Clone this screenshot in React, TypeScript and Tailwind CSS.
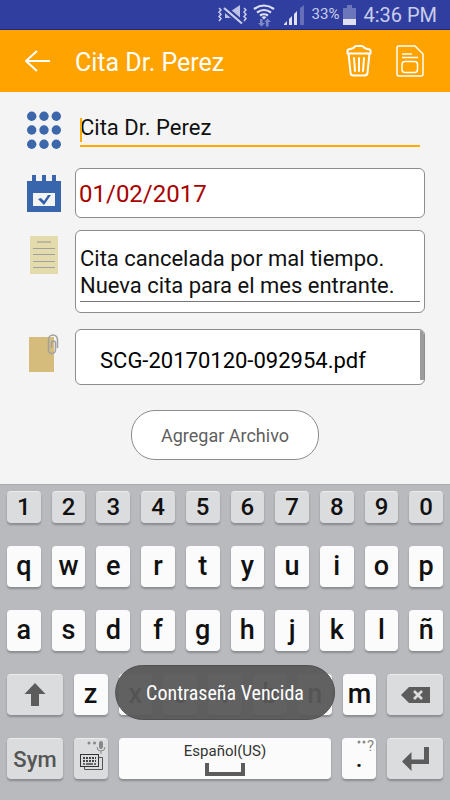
import type { ReactNode } from "react"

const numbers = ["1", "2", "3", "4", "5", "6", "7", "8", "9", "0"]
const firstRow = ["q", "w", "e", "r", "t", "y", "u", "i", "o", "p"]
const secondRow = ["a", "s", "d", "f", "g", "h", "j", "k", "l", "ñ"]
const thirdRow = ["z", "x", "c", "v", "b", "n", "m"]

const light = "bg-[#fbfbfb] text-[#111111]"
const dark = "bg-[#dbdcde] text-[#555555] border-t border-[#ececec]"

function Key({ className, label, children }: { className: string; label?: string; children: ReactNode }) {
  return (
    <button
      type="button"
      aria-label={label}
      className={`flex min-w-0 items-center justify-center rounded-[4px] shadow-[0_2px_2px_rgba(0,0,0,0.25)] ${className}`}
    >
      {children}
    </button>
  )
}

function StatusBar() {
  return (
    <div className="flex h-[30px] items-center justify-end border-b border-[#1c2a80] bg-[#303f9f] pr-[13px] text-[#c9cdea]">
      <svg width="30" height="22" viewBox="0 0 30 22" fill="none" className="mr-[6px]">
        <path d="M2 4l2 2-2 2 2 2.500-2 2 2 2-2 2.500M27 4l2 2-2 2 2 2.500-2 2 2 2-2 2.500" stroke="#c9cdea" strokeWidth="1.500" />
        <path d="M8 7h6l9-6v19l-9-6H8z" fill="#bcc2e4" />
        <path d="M7 6.500l18 15.500" stroke="#303f9f" strokeWidth="2.500" />
        <path d="M7 1.500l18 15.500" stroke="#303f9f" strokeWidth="2.500" />
        <path d="M7 4l18 15.500" stroke="#c9cdea" strokeWidth="2.200" />
      </svg>
      <svg width="22" height="24" viewBox="0 0 22 24" fill="none" className="mr-[9px]">
        <path d="M1 6Q11-1 21 6M4 9.500Q11 4.500 18 9.500M7 12.500Q11 10 15 12.500" stroke="#dfe1f2" strokeWidth="2.200" />
        <path d="M8.500 14q2.500-1.500 5 0L11 16.500z" fill="#dfe1f2" />
        <path d="M7 16h2.500v4H12l-3.500 3.500L5 20h2zM13 23.500h2.500V19H18l-3.500-3.500L11.500 19H13z" fill="#7f89c6" />
      </svg>
      <svg width="20" height="20" viewBox="0 0 20 20" className="mr-[8px]">
        <path d="M0 20v-1l3-3v4zM5 20v-6l3-3v9zM10 20V9l3-3v14z" fill="#dfe1f2" />
        <path d="M16 20V3l4-3v20z" fill="#6570b8" />
      </svg>
      <span className="mr-[4px] text-[15px]">33%</span>
      <svg width="13" height="20" viewBox="0 0 13 20" className="mr-[7px]">
        <path d="M4 0h5v3h4v17H0V3h4z" fill="#6c76bb" />
        <path d="M0 14h13v6H0z" fill="#dfe1f2" />
      </svg>
      <span className="text-[20px]">4:36 PM</span>
    </div>
  )
}

function Header() {
  return (
    <header className="flex h-[62px] items-center bg-[#ffa300] pr-[26px] pl-[25px] text-white">
      <button type="button" aria-label="Volver">
        <svg width="25" height="22" viewBox="0 0 25 22" fill="none" stroke="currentColor" strokeWidth="2">
          <path d="M25 11H1M12 1L1 11l11 10" />
        </svg>
      </button>
      <h1 className="ml-[25px] flex-1 pt-[3px] text-[25px]">Cita Dr. Perez</h1>
      <button type="button" aria-label="Eliminar" className="mr-[24px]">
        <svg width="26" height="32" viewBox="0 0 26 32" fill="none" stroke="currentColor" strokeWidth="2" strokeLinecap="round" strokeLinejoin="round">
          <path d="M2.500 8.500H1.500V6Q1.500 4 4.500 4L7.500 3Q8.500 1 10.500 1h5q2 0 3 2l3 1q3 0 3 2v2.500H2.500l2 19q0 3 3 3h11q3 0 3-3l2-19" />
          <path d="M8 13l1 13M13 13v13M18 13l-1 13" />
        </svg>
      </button>
      <button type="button" aria-label="Guardar">
        <svg width="28" height="32" viewBox="0 0 28 32" fill="none" stroke="currentColor" strokeWidth="1.500" strokeLinejoin="round">
          <path d="M3 1h16l8 8v20q0 2-2 2H3q-2 0-2-2V3q0-2 2-2z" />
          <rect x="6" y="16.500" width="15.500" height="11" rx="3" />
          <path d="M6 9h10M6 12.500h16" />
        </svg>
      </button>
    </header>
  )
}

function GridIcon() {
  return (
    <svg width="34" height="38" viewBox="0 0 34 38" fill="#3c68ab">
      {[5.2, 19, 33.2].map((cy) => [4.7, 17, 29.3].map((cx) => <circle key={`${cx}-${cy}`} cx={cx} cy={cy} r="4.700" />))}
    </svg>
  )
}

function CalendarIcon() {
  return (
    <svg width="34" height="37" viewBox="0 0 34 37">
      <path d="M0 6h5V0h4v6h6V0h4v6h6V0h4v6h5v31H0z" fill="#3865ab" />
      <path d="M6 18h22v13H6z" fill="#f4f4f4" />
      <path d="M11 24l3-1 3 3 4-6h3l-7 10z" fill="#2f5fa8" />
    </svg>
  )
}

function NoteIcon() {
  return (
    <svg width="28" height="38" viewBox="0 0 28 38">
      <path d="M0 0h28v38H0z" fill="#e3dbab" />
      <path d="M7 6h14" stroke="#bcb8a0" strokeWidth="2" />
      <path d="M3 12.500h22M3 18.500h22M3 25.500h22M3 31.500h22" stroke="#9f9fa5" />
    </svg>
  )
}

function AttachmentIcon() {
  return (
    <svg width="30" height="38" viewBox="0 0 30 38" fill="none">
      <path d="M0 3h25v35H0z" fill="#d5bc7c" />
      <path d="M28.500 14V5.500a4.500 4.500 0 0 0-9 0V16a3.500 3.500 0 0 0 7 0V9a2 2 0 0 0-4 0v5" stroke="#a0a0a0" strokeWidth="1.500" />
    </svg>
  )
}

function AppointmentForm() {
  return (
    <form className="flex flex-1 flex-col bg-[#f4f4f4] px-[25px] pt-[19px] pb-6">
      <div className="flex items-center gap-3">
        <label htmlFor="nombre" aria-label="Nombre" className="flex w-[38px] justify-center">
          <GridIcon />
        </label>
        <div className="relative mx-[5px] flex-1">
          <input
            id="nombre"
            type="text"
            defaultValue="Cita Dr. Perez"
            className="block h-[34px] w-full border-b-2 border-[#ffab00] bg-transparent pb-[3px] text-[22px] text-[#111111] outline-none"
          />
          <span className="absolute top-[5px] left-0 h-6 w-[2px] bg-[#ffab00]" />
        </div>
      </div>

      <div className="mt-[19px] flex items-center gap-3">
        <label htmlFor="fecha" aria-label="Fecha" className="flex w-[38px] justify-center">
          <CalendarIcon />
        </label>
        <input
          id="fecha"
          type="text"
          defaultValue="01/02/2017"
          className="h-[50px] min-w-0 flex-1 rounded-[6px] border border-[#8c8c8c] bg-white px-[3px] pt-[2px] text-[24px] text-[#a90000] outline-none"
        />
      </div>

      <div className="mt-[12px] flex items-start gap-3">
        <label htmlFor="nota" aria-label="Nota" className="mt-[6px] flex w-[38px] justify-center">
          <NoteIcon />
        </label>
        <div className="flex-1 rounded-[6px] border border-[#8c8c8c] bg-white px-1 pt-[14px] pb-[10px]">
          <textarea
            id="nota"
            rows={2}
            defaultValue={"Cita cancelada por mal tiempo.\nNueva cita para el mes entrante."}
            className="block w-full resize-none overflow-hidden border-b border-[#777777] pb-[2px] text-[22px] leading-[27px] text-[#111111] outline-none"
          />
        </div>
      </div>

      <div className="mt-[16px] flex items-start gap-3">
        <span className="mt-[5px] flex w-[38px] justify-center">
          <AttachmentIcon />
        </span>
        <div className="flex h-[56px] flex-1 items-start justify-between overflow-hidden rounded-[6px] border border-[#8c8c8c] bg-white pl-6">
          <a href="#archivo" className="mt-[15px] text-[22px] leading-[32px] text-black">
            SCG-20170120-092954.pdf
          </a>
          <span className="h-[50px] w-1 bg-[#9c9c9c]" />
        </div>
      </div>

      <button
        type="button"
        className="mt-[25px] h-[50px] self-center rounded-[24px] border border-[#8c8c8c] bg-white px-[29px] text-[18px] text-[#5f5f5f]"
      >
        Agregar Archivo
      </button>
    </form>
  )
}

function Keyboard() {
  return (
    <div className="relative flex flex-col gap-[23px] border-t border-[#a9aaad] bg-[#b9babe] px-[7px] pt-[6px] pb-[21px]">
      <div className="flex h-[32px] gap-[11px]">
        {numbers.map((key) => (
          <Key key={key} className="flex-1 border-t border-[#ececec] bg-[#dbdcde] pb-[2px] text-[24px] font-medium text-[#111111]">
            {key}
          </Key>
        ))}
      </div>
      {[firstRow, secondRow].map((row) => (
        <div key={row[0]} className="flex h-[41px] gap-[11px]">
          {row.map((key) => (
            <Key key={key} className={`flex-1 text-[27px] font-medium ${light}`}>
              {key}
            </Key>
          ))}
        </div>
      ))}
      <div className="flex h-[41px] gap-[11px]">
        <Key label="Mayúsculas" className={`flex-[56] ${dark}`}>
          <svg width="22" height="24" viewBox="0 0 22 24" fill="#5c5c5c">
            <path d="M11 0l10.500 11H15v12H7V11H.500z" />
          </svg>
        </Key>
        {thirdRow.map((key) => (
          <Key key={key} className={`flex-[34] text-[27px] font-medium ${light}`}>
            {key}
          </Key>
        ))}
        <Key label="Borrar" className={`flex-[56] ${dark}`}>
          <svg width="29" height="16" viewBox="0 0 29 16">
            <path d="M8 0h21v16H8L0 8z" fill="#5c5c5c" />
            <path d="M13 4l8 8M21 4l-8 8" stroke="#dbdcde" strokeWidth="2.500" />
          </svg>
        </Key>
      </div>
      <div className="flex h-[41px] gap-[11px]">
        <Key className={`flex-[56] text-[22px] font-medium ${dark}`}>Sym</Key>
        <Key label="Opciones de teclado" className={`flex-[34] ${dark}`}>
          <svg width="30" height="34" viewBox="0 0 30 34" fill="none" className="self-start">
            <circle cx="13" cy="4" r="1.500" fill="#888888" />
            <circle cx="18.500" cy="4" r="1.500" fill="#888888" />
            <rect x="23" y="2" width="4" height="8" rx="2" fill="#888888" />
            <path d="M21 8q0 4 4 4t4-4M25 12v3" stroke="#888888" />
            <path d="M23 18.500h3.500v12h-18V27" stroke="#555555" />
            <rect x="4.500" y="15.500" width="18" height="12" stroke="#333333" />
            <path d="M7 19h13M7 22h13" stroke="#444444" strokeWidth="2" strokeDasharray="2 1" />
            <path d="M7 25h2M10 25h7M18 25h2" stroke="#444444" strokeWidth="1.500" />
          </svg>
        </Key>
        <Key className="flex-[212] flex-col bg-[#fbfbfb] text-[15px] leading-[18px] text-[#333333]">
          Español(US)
          <svg width="40" height="13" viewBox="0 0 40 13" fill="none" className="mt-[3px]">
            <path d="M2 0v11h36V0" stroke="#5c5c5c" strokeWidth="4" />
          </svg>
        </Key>
        <Key className={`relative flex-[34] text-[24px] font-medium ${light}`}>
          .
          <span className="absolute top-0 right-[2px] flex items-start text-[15px] leading-[17px] font-normal text-[#888888]">
            <svg width="11" height="6" viewBox="0 0 11 6" fill="currentColor">
              <circle cx="3" cy="4" r="1.500" />
              <circle cx="8" cy="4" r="1.500" />
            </svg>
            ?
          </span>
        </Key>
        <Key label="Intro" className={`flex-[56] ${dark}`}>
          <svg width="27" height="24" viewBox="0 0 27 24">
            <path d="M0 14.500L9.500 5v7.500H22V0h5v17H9.500v7z" fill="#5c5c5c" />
          </svg>
        </Key>
      </div>

      <div
        role="status"
        className="absolute bottom-[80px] left-1/2 flex h-[55px] -translate-x-1/2 items-center rounded-full border border-[#505050] bg-[#585858]/95 px-[30px] font-['Roboto_Condensed','Roboto',sans-serif] text-[20px] whitespace-nowrap text-white"
      >
        Contraseña Vencida
      </div>
    </div>
  )
}

export default function App() {
  return (
    <div className="flex min-h-screen flex-col bg-[#f4f4f4] font-['Roboto',sans-serif]">
      <StatusBar />
      <Header />
      <AppointmentForm />
      <Keyboard />
    </div>
  )
}
